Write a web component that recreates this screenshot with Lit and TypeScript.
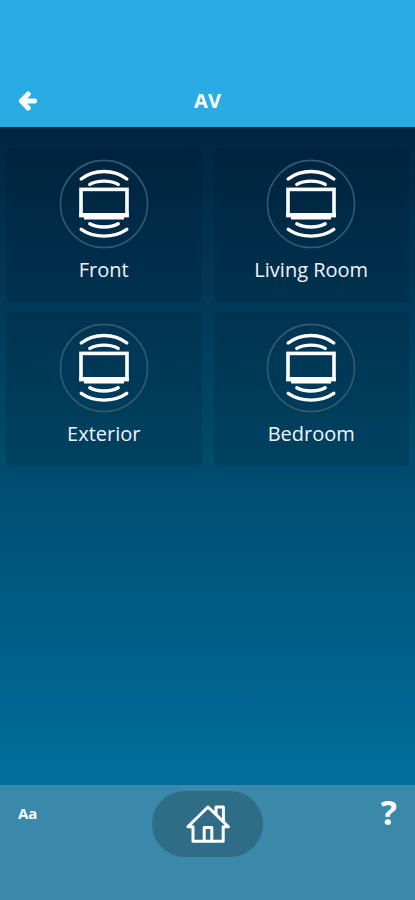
import { LitElement, html, css } from "lit";
import { customElement, property, state } from "lit/decorators.js";

@customElement("av-icon")
class AvIcon extends LitElement {
  static styles = css`
    :host {
      display: block;
    }
    .icon {
      display: block;
      width: 90px;
      height: 90px;
      fill: none;
      stroke: #fff;
    }
    .ring {
      stroke: #345a72;
      stroke-width: 1.6;
    }
    .wave {
      stroke-width: 3.4;
      stroke-linecap: round;
    }
    .screen {
      stroke-width: 3.6;
      stroke-linejoin: miter;
    }
    .base {
      fill: #fff;
      stroke: none;
    }
  `;

  render() {
    return html`
      <svg class="icon" viewBox="0 0 90 90" aria-hidden="true">
        <circle class="ring" cx="45" cy="45" r="43.6" />
        <path class="wave" d="M22.2 20C35 10 55 10 67.8 20" />
        <path class="wave" d="M30.8 25.4C38 21 52 21 59.2 25.4" />
        <rect class="screen" x="22" y="30.4" width="46" height="26" />
        <path class="base" d="M20.2 54h49.6v4.2H65v2.2H25v-2.2h-4.8z" />
        <path class="wave" d="M30.8 64.8C38 69 52 69 59.2 64.8" />
        <path class="wave" d="M22.2 70.4C35 79.4 55 79.4 67.8 70.4" />
      </svg>
    `;
  }
}

@customElement("room-tile")
class RoomTile extends LitElement {
  @property() name = "";

  static styles = css`
    :host {
      display: block;
    }
    .tile {
      display: flex;
      flex-direction: column;
      align-items: center;
      gap: 7px;
      box-sizing: border-box;
      width: 100%;
      min-height: 154px;
      padding: 11px 0 0;
      border: 0;
      border-radius: 4px;
      background: rgba(0, 16, 24, 0.14);
      color: #f2f5fa;
      font: 20px/28px "Open Sans", sans-serif;
      cursor: pointer;
    }
  `;

  render() {
    return html`
      <button class="tile" type="button">
        <av-icon></av-icon>
        <span>${this.name}</span>
      </button>
    `;
  }
}

@customElement("app-root")
class AppRoot extends LitElement {
  @state() private rooms = ["Front", "Living Room", "Exterior", "Bedroom"];

  static styles = css`
    :host {
      display: flex;
      flex-direction: column;
      min-height: 100vh;
      color: #fff;
      font-family: "Open Sans", sans-serif;
    }
    button {
      padding: 0;
      border: 0;
      background: none;
      color: inherit;
      font: inherit;
      cursor: pointer;
    }
    svg {
      display: block;
    }
    .header {
      display: grid;
      grid-template-columns: 56px 1fr 56px;
      align-items: center;
      padding-top: 74px;
      background: #29abe4;
    }
    .back {
      display: grid;
      place-items: center;
      height: 53px;
    }
    .title {
      margin: 0;
      text-align: center;
      font-size: 20px;
      line-height: 28px;
      font-weight: 700;
    }
    .content {
      flex: 1;
      padding: 21px 6px;
      background: linear-gradient(#002542, #004a6d 50%, #006f9d);
    }
    .grid {
      display: grid;
      grid-template-columns: 1fr 1fr;
      gap: 10px 12px;
    }
    .footer {
      display: grid;
      grid-template-columns: 1fr auto 1fr;
      align-items: start;
      box-sizing: border-box;
      min-height: 115px;
      padding: 6px 18px;
      background: #3a88aa;
    }
    .text-size {
      justify-self: start;
      margin-top: 12px;
      font-size: 15px;
      line-height: 20px;
      font-weight: 700;
    }
    .home {
      display: grid;
      place-items: center;
      width: 111px;
      height: 66px;
      border-radius: 33px;
      background: #2e6d85;
    }
    .help {
      justify-self: end;
      font-size: 34px;
      line-height: 42px;
      font-weight: 700;
    }
  `;

  render() {
    return html`
      <header class="header">
        <button class="back" type="button" aria-label="Back">
          <svg width="20" height="20" viewBox="0 0 20 20" fill="none" stroke="#fff"
            stroke-width="5" stroke-linecap="round" stroke-linejoin="round">
            <path d="M10.2 3L3.4 10l6.8 7M4.4 10h12.2" />
          </svg>
        </button>
        <h1 class="title">AV</h1>
      </header>
      <main class="content">
        <div class="grid">
          ${this.rooms.map((room) => html`<room-tile .name=${room}></room-tile>`)}
        </div>
      </main>
      <footer class="footer">
        <button class="text-size" type="button" aria-label="Aa, text size">Aa</button>
        <button class="home" type="button" aria-label="Home">
          <svg width="46" height="40" viewBox="0 0 46 40" fill="none" stroke="#fff"
            stroke-width="3" stroke-linejoin="round">
            <path d="M23 3L2.8 22.8H8V37.2H38.2V22.8H43.4L38.4 17.8V3H31V10.6z" />
            <path d="M31 10.6L38.4 17.8" />
            <path d="M19.2 37.2V23.6H26.8V37.2" />
          </svg>
        </button>
        <button class="help" type="button" aria-label="? Help">?</button>
      </footer>
    `;
  }
}
